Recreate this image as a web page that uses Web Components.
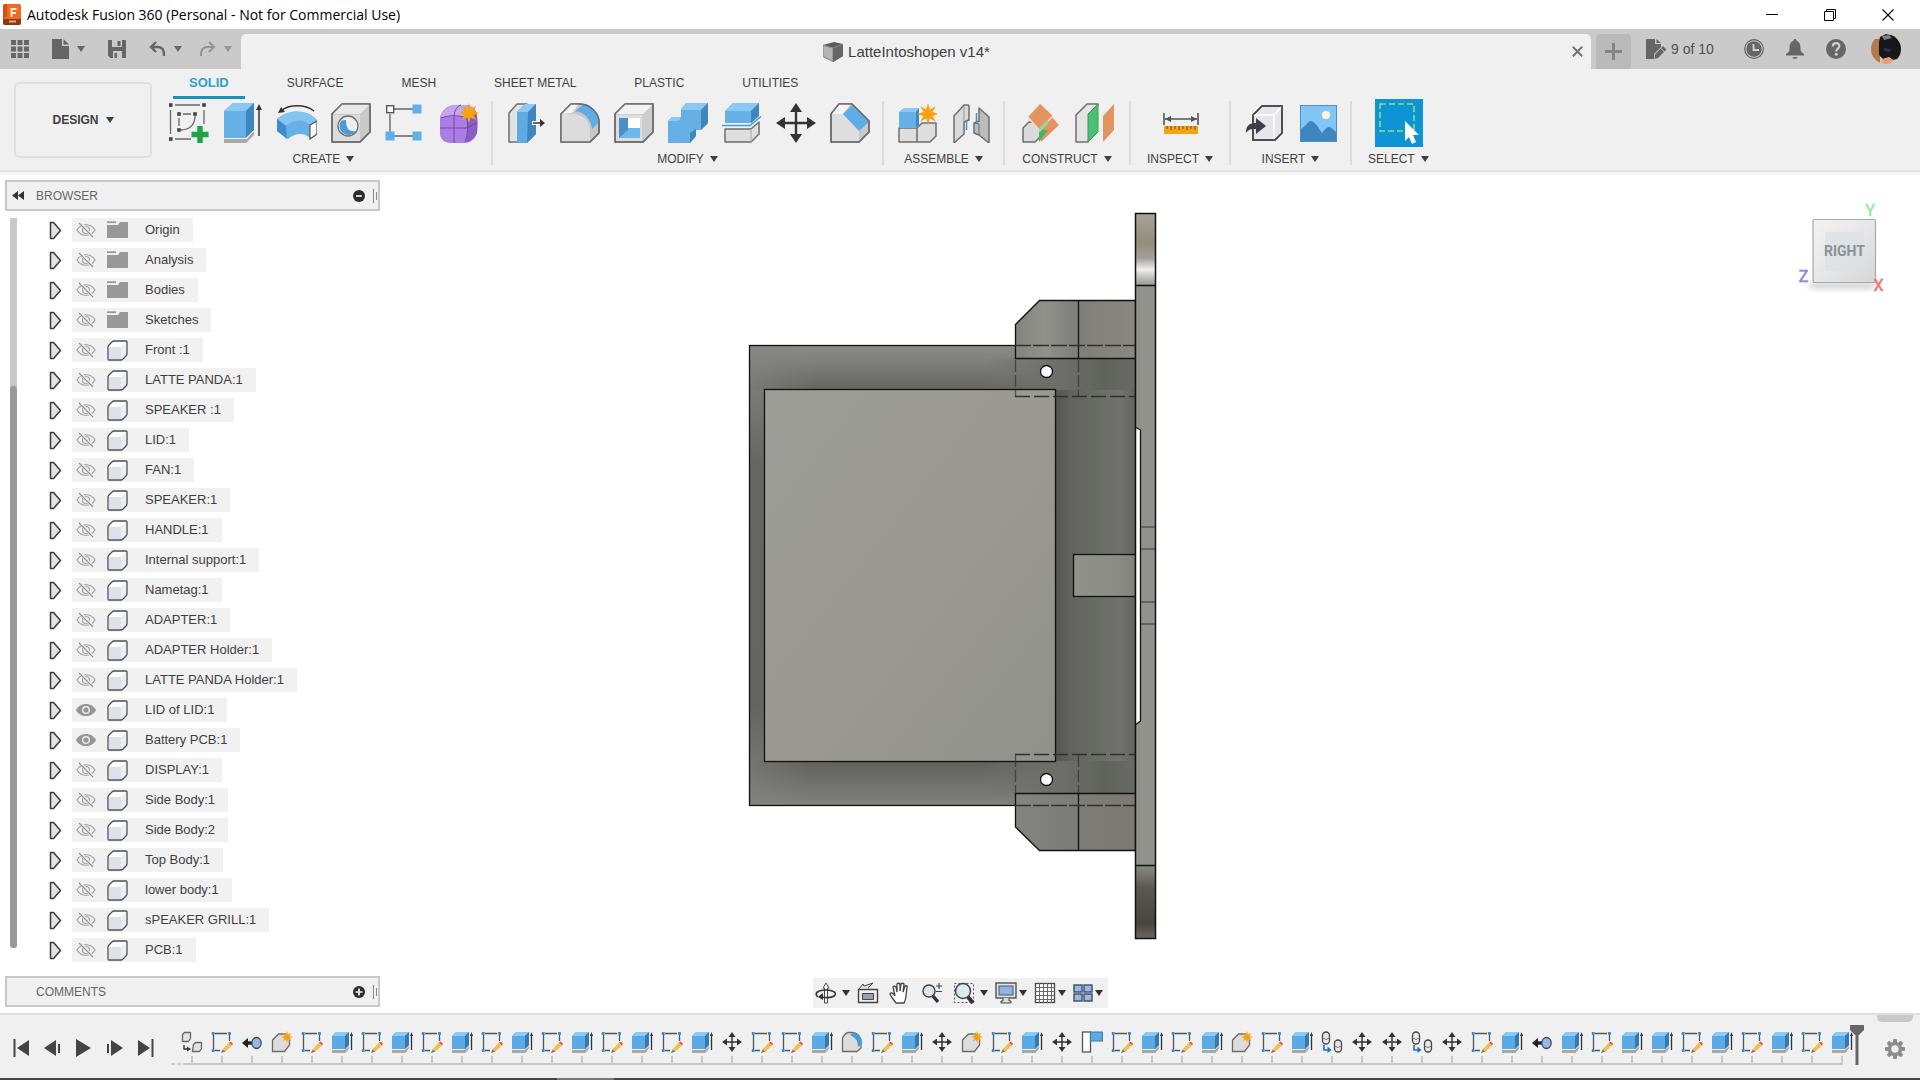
<!DOCTYPE html>
<html lang="en">
<head>
<meta charset="utf-8">
<title>Autodesk Fusion 360</title>
<style>
  html, body { margin: 0; height: 100%; overflow: hidden; background: #fff; }
  body { font: 13px/16px "Liberation Sans", Arial, sans-serif; color: #404040; }
</style>
</head>
<body>
<fusion-app></fusion-app>
<script>
const star = (cx, cy, R, r) => {
  let p = '';
  for (let i = 0; i < 16; i++) {
    const a = Math.PI * i / 8 - Math.PI / 2, q = i % 2 ? r : R;
    p += (cx + q * Math.cos(a)).toFixed(1) + ',' + (cy + q * Math.sin(a)).toFixed(1) + ' ';
  }
  return `<polygon points="${p}" fill="#f6a30f"/>`;
};
const sq = (x, y, s, f) => `<rect x="${x - s / 2}" y="${y - s / 2}" width="${s}" height="${s}" fill="${f}"/>`;
const G = 'stroke="#6e6e6e" stroke-width="1.5" stroke-linejoin="round"';
const gearTeeth = [0, 45, 90, 135, 180, 225, 270, 315].map(a => `<rect x="8" y="0" width="4" height="5" rx="1" transform="rotate(${a} 10 10)"/>`).join('');

/* Each entry: [width, height, markup] */
const ICONS = {
  logo: [18, 21, `<rect width="18" height="21" rx="2" fill="#f26a1b"/><path d="M0 15h18v4a2 2 0 0 1-2 2H2a2 2 0 0 1-2-2z" fill="#8a3a0c"/><path d="M0 15L4 12V0H2a2 2 0 0 0-2 2z" fill="#d4500f"/><path d="M7.500 4h6v2H9.500v2h3.500v2H9.500v3h-2z" fill="#ffe9d9"/><rect x="6" y="16.500" width="7" height="2" fill="#d9b09a"/>`],
  min: [12, 12, `<path d="M0 5.500h12" stroke="#000"/>`],
  restore: [12, 12, `<path d="M.5 2.500h9v9h-9zM2.500 2.500v-2h9v9h-2" fill="none" stroke="#000"/>`],
  close: [12, 12, `<path d="M.5.5l11 11m0-11l-11 11" stroke="#000" stroke-width="1.100"/>`],
  grid: [18, 18, `<g fill="#666">${[0, 6.5, 13].map(y => [0, 6.5, 13].map(x => `<rect x="${x}" y="${y}" width="5" height="5"/>`).join('')).join('')}</g>`],
  file: [17, 20, `<path d="M0 0h10v7h7v13H0z" fill="#666"/><path d="M11.500 0L17 5.500h-5.500z" fill="#666"/>`],
  save: [18, 18, `<path d="M0 0h18v18H2.500L0 15.500z" fill="#666"/><path d="M4 0h10v7H4zM5 11h9v7H5z" fill="#cacaca"/><path d="M9.500 1h3v5h-3zM6.500 13h2.500v5h-2.500zM4 3h4" fill="#666"/>`],
  undo: [17, 16, `<path d="M7 1L2 6l5 5M2.500 6H9c4 0 6.500 3 6 9" fill="none" stroke="#666" stroke-width="2.400"/>`],
  redo: [17, 16, `<path d="M10 1l5 5-5 5M14.500 6H8c-4 0-6.500 3-6 9" fill="none" stroke="#949494" stroke-width="2"/>`],
  caret: [8, 6, `<path d="M0 0h8L4 6z" fill="currentColor"/>`],
  doccube: [20, 20, `<path d="M0 3L11 0l9 2v12L10 20 0 15z" fill="#5c5c5c"/><path d="M0 3l10 3v14L0 15z" fill="#9c9c9c"/><path d="M1 4l8 2.500V18l-8-4z" fill="#b5b5b5"/><path d="M10 6l10-4v12l-10 6z" fill="#666"/><path d="M0 3l10 3 10-4" fill="none" stroke="#888"/>`],
  x: [11, 11, `<path d="M.8.8l9.400 9.400M10.200.8L.8 10.200" stroke="#747474" stroke-width="2"/>`],
  plus: [17, 17, `<path d="M8.500 0v17M0 8.500h17" stroke="#858585" stroke-width="3"/>`],
  docpen: [21, 20, `<path d="M0 0h9v5h6v3L8 15v5H0z" fill="#666"/><path d="M10.500 0L15 4h-4.500z" fill="#666"/><path d="M17 7l3.500 3.500L12 19l-3.500 1 .5-4.500z" fill="#666"/><path d="M14.500 9l4 4" stroke="#cacaca"/>`],
  clock: [20, 20, `<circle cx="10" cy="10" r="9.300" fill="none" stroke="#666" stroke-width="1.200"/><circle cx="10" cy="10" r="7.700" fill="#666"/><path d="M9.500 5v6H15" fill="none" stroke="#d4d4d4" stroke-width="1.800"/>`],
  bell: [18, 20, `<path d="M9 0c1 0 1.500.7 1.500 1.700C14 3 14.500 6 14.500 10c0 2 1 3.500 3.500 5v1.500H0V15c2.500-1.500 3.500-3 3.500-5 0-4 .5-7 4-8.300C7.500.7 8 0 9 0zM6.500 18h5c-.5 2.500-4.500 2.500-5 0z" fill="#666"/>`],
  help: [20, 20, `<circle cx="10" cy="10" r="10" fill="#666"/><path d="M6.800 7.500c0-4.500 6.600-4.300 6.600-.4 0 2.700-3.200 2.600-3.200 5.400" fill="none" stroke="#cecece" stroke-width="2.200"/><circle cx="10.200" cy="15.300" r="1.500" fill="#cecece"/>`],
  avatar: [30, 30, `<defs><clipPath id="c"><circle cx="15" cy="15" r="15"/></clipPath></defs><g clip-path="url(#c)"><rect width="30" height="30" fill="#d6c4b4"/><rect width="9" height="30" y="5" fill="#b07a4c"/><path d="M9 3l6-3 9 2 6 7v15l-8 2-4-3-5 3-5-5V8z" fill="#17161a"/><path d="M11 2l7-1 3 3-8 2z" fill="#7d8288"/><path d="M11 25l7-2 4 4-3 3h-7z" fill="#e0a07c"/><path d="M13 14l7 1-1 3-6-1z" fill="#2a3148"/></g>`],

  sketch: [40, 40, `<path d="M6 2h25M1.500 7v24M35 7v14M6 36h16" stroke="#666" stroke-width="1.300" fill="none"/>${sq(1.8, 2, 3.6, '#444')}${sq(35, 2, 3.6, '#444')}${sq(1.8, 36, 3.6, '#444')}<path d="M14 11h8M10 15v8M26 13C26 22 20 27 12 27" stroke="#666" stroke-width="1.300" fill="none"/>${sq(10, 11, 3.6, '#444')}${sq(26, 11, 3.6, '#444')}${sq(10, 27, 3.6, '#444')}<path d="M31 23v17M22.500 31.500h17" stroke="#1fa24a" stroke-width="5.400"/>`],
  extrude: [40, 40, `<path d="M1 36l23 0 7-8v4l-8 8H1z" fill="#a9a9a9"/><path d="M1 8l9-8h21v27l-8 8H1z" fill="#67b0e6"/><path d="M1 8l9-8h21l-8 8z" fill="#8bc8f2"/><path d="M23 8l8-8v27l-8 8z" fill="#3f86bf"/><path d="M1 36v-.5h22l8-8" stroke="#f2f2f2" fill="none"/><path d="M36 33V5" stroke="#333" stroke-width="1.500"/><path d="M33 7l3-6 3 6z" fill="#333"/>`],
  revolve: [40, 40, `<path d="M0 16C12 6 30 6 40 17l-7 5v13c-6-6-15-5-22 1L0 28z" fill="#67b0e6"/><path d="M0 16C12 6 30 6 40 17l-7 5C26 15 16 17 9 23z" fill="#84c4f0"/><path d="M0 16l9 7 1 13L0 28z" fill="#3f8ccc"/><path d="M33 22l7-4v13l-7 5z" fill="#fff" stroke="#555" stroke-width="1.200"/><path d="M37 8C28 1 12 1 4 8" fill="none" stroke="#333" stroke-width="1.500"/><path d="M1 10l3-6 4 5z" fill="#333"/>`],
  hole: [40, 40, `<path d="M1 11L11 1h28v28L29 39H1z" fill="#c9c9c9" ${G}/><path d="M1 11L11 1h28L29 11z" fill="#e9e9e9"/><path d="M2 12h27v26H2z" fill="#dcdcdc"/><path d="M1 11L11 1h28v28L29 39H1z" fill="none" ${G}/><circle cx="17" cy="23" r="10" fill="#eee" stroke="#6e6e6e" stroke-width="1.300"/><path d="M10 18a9 9 0 1 0 15 10c-7 1-10-2-10-11a9 9 0 0 0-5 1z" fill="#4c9ad6"/>`],
  pattern: [40, 40, `<path d="M9 6h20M5 11v18M9 33h20" stroke="#666" stroke-width="1.400" fill="none"/><rect x="1.700" y="2.700" width="7" height="7" fill="#fff" stroke="#555" stroke-width="1.400"/>${sq(32, 6, 9, '#5fb0ea')}${sq(5, 33, 9, '#5fb0ea')}${sq(32, 33, 9, '#5fb0ea')}`],
  form: [40, 40, `<path d="M1 16C1 8 9 2 17 2h9c8 0 12 6 12 12v14c0 6-6 12-12 12H12C5 40 1 36 1 30z" fill="#ab7ee2"/><path d="M1 14C5 5 12 2 18 2h8c4 0 8 3 10 6-4-1-7 2-9 5z" fill="#c4a6ee"/><path d="M28 14c3-4 6-6 9-5 2 6 2 15 1 21-2 5-7 9-11 9 2-8 2-17 1-25z" fill="#8a5cc4"/><path d="M1 25h26l11-5M15 40V14C15 8 18 3 22 2M2 15c8-3 18-3 26 0 1 8 1 17-2 24" stroke="#7444b0" stroke-width="1" fill="none"/>${star(30, 10, 10, 5)}`],
  presspull: [40, 40, `<path d="M3 10L11 1h10v30l-9 8H3z" fill="#e2e2e2" ${G}/><path d="M11 9l8-8h11v30l-9 9H11z" fill="#5faae0"/><path d="M11 9l8-8h11l-8 8z" fill="#8bc8f2"/><path d="M22 9l8-8v30l-9 9z" fill="#3f86bf"/><path d="M26 20h8" stroke="#fff" stroke-width="4"/><path d="M27 20h9" stroke="#333" stroke-width="1.500"/><path d="M34 16l5 4-5 4z" fill="#333"/>`],
  fillet: [40, 40, `<path d="M1 11L11 1h9c10 0 20 10 19 20v9l-9 9H1z" fill="#c6c6c6" ${G}/><path d="M1 11h11c12 0 18 8 18 17v11H1z" fill="#dcdcdc"/><path d="M1 11L11 1h8l-7 9z" fill="#f4f4f4"/><path d="M15 8l9-7c9 2 15 9 15 18l-7 7c-1-9-7-17-17-18z" fill="#5fade6"/><path d="M1 11L11 1h9c10 0 20 10 19 20v9l-9 9H1z" fill="none" ${G}/>`],
  shell: [40, 40, `<path d="M1 11L11 1h28v28L29 39H1z" fill="#cdcdcd" ${G}/><path d="M1 11L11 1h28L29 11z" fill="#f2f2f2"/><path d="M2 12h26v26H2z" fill="#ddd"/><rect x="5" y="15" width="21" height="20" fill="#fff"/><path d="M5 15l9 10h12v10H5z" fill="#6db9ee"/><path d="M5 15h9v12l-9 8z" fill="#4a90c8"/><path d="M1 11L11 1h28v28L29 39H1z" fill="none" ${G}/>`],
  combine: [40, 40, `<path d="M0 18l4-4h9V6l5-6h22v20l-7 7h-5v6l-6 7H0z" fill="#67b0e6"/><path d="M0 18l4-4h9l-2 4zM13 7l5-7h22l-7 7z" fill="#8bc8f2"/><path d="M33 7l7-7v20l-7 7zM22 30l6-4v7l-6 7z" fill="#3f86bf"/>`],
  split: [40, 40, `<path d="M3 8l8-8h26v13l-8 7H3z" fill="#67b0e6"/><path d="M3 8l8-8h26l-8 8z" fill="#8bc8f2"/><path d="M29 8l8-8v13l-8 7z" fill="#3f86bf"/><path d="M0 22.500h28l11-9" fill="none" stroke="#3f9fd8" stroke-width="1.600"/><path d="M3 26h26l8-7v12l-8 8H3z" fill="#dedede" ${G}/><path d="M29 26v13" stroke="#aaa"/>`],
  move: [40, 40, `<path d="M20 5v30M5 20h30" stroke="#333" stroke-width="2.400"/><path d="M20 0l6 9H14zM20 40l6-9H14zM0 20l9-6v12zM40 20l-9-6v12z" fill="#333"/>`],
  chamfer: [40, 40, `<path d="M1 11L9 1h13l17 17v11l-10 10H1z" fill="#cacaca" ${G}/><path d="M2 11h11l16 16v11H2z" fill="#dedede"/><path d="M1 11L9 1h12l-8 10z" fill="#f4f4f4"/><path d="M13 11l9-9 17 17-10 9z" fill="#5fade6"/><path d="M1 11L9 1h13l17 17v11l-10 10H1z" fill="none" ${G}/>`],
  newcomp: [40, 40, `<path d="M2 25h18v14H2zM20 25l5-5h14v13l-6 6H20z" fill="#dedede" ${G}/><path d="M2 9l5-4h15v16l-2 4H2z" fill="#67b0e6"/><path d="M2 9l5-4h15l-3 4z" fill="#8bc8f2"/><path d="M19 9l3-4v17l-3 3z" fill="#3f86bf"/>${star(31, 11, 11, 5)}`],
  joint: [40, 40, `<path d="M3 13L13 2h4q1 0 1 1v14l-5 2v12L3 40z" fill="#d9d9d9" ${G}/><path d="M13 3v16" stroke="#999"/><path d="M38 14L28 5v13l-5 2v10l5 2 10 8z" fill="#bcbcbc" ${G}/><path d="M23 20l5 1v11" fill="none" stroke="#6e6e6e"/><path d="M15.500 18v9M25.500 10v9" stroke="#3a95d8" stroke-width="1.500"/>`],
  cplane: [40, 40, `<path d="M2 25l6-6h12v14l-6 6H2z" fill="#dadada" ${G}/><path d="M19 1l19 21-18 17-2-15z" fill="#e2935f"/><path d="M18 39l9-12V15L18 26z" fill="#3cb863"/><path d="M7 14L19 1l12 11-3 16-10-2z" fill="#e2935f"/><path d="M7 14l11 13 13-13" stroke="#f3ddd0" stroke-width="1.500" fill="none"/><path d="M18 25l9-9v5l-9 9z" fill="#9fd0a0"/>`],
  cplane2: [40, 40, `<path d="M1 12L12 1h11L13 39H1z" fill="#e4e4e4" ${G}/><path d="M13 11L23 1v28L13 39z" fill="#4bc074" stroke="#3a9d5c"/><path d="M28 13L39 1v26L28 39z" fill="#e2935f"/>`],
  measure: [40, 40, `<path d="M3 10v12M37 10v12M4 16h32" stroke="#555" stroke-width="1.600"/><path d="M4 16l6-3v6zM36 16l-6-3v6z" fill="#555"/><rect x="3" y="23" width="34" height="8" fill="#f5a316"/><path d="M6 23v3M10 23v4M14 23v3M18 23v4M22 23v3M26 23v4M30 23v3M34 23v4" stroke="#6b4a10"/>`],
  insert: [40, 40, `<path d="M9 12L18 3h20v27l-7 7H9z" fill="#e6e6ec" stroke="#444" stroke-width="1.500"/><path d="M9 12h21l8-9M30 12v25" stroke="#fff" stroke-width="1.500" fill="none"/><path d="M9 12L18 3h20v27l-7 7H9z" fill="none" stroke="#444" stroke-width="1.500"/><path d="M2 30c0-8 4-10 10-10v-5l10 8-10 8v-5c-5 0-7 0-10 4z" fill="#3c3f46"/>`],
  image: [40, 40, `<rect x="2.500" y="2.500" width="36" height="36" fill="#82c6f8" stroke="#4d8fc4"/><path d="M3 26c5-3 7-8 10-8s7 6 11 12c3-4 5-6 7-6s4 2 7 5v9H3z" fill="#3f86bf"/><circle cx="28" cy="12" r="4" fill="#fbf8d0"/>`],
  select: [48, 48, `<rect width="48" height="48" fill="#0d94d4"/><path d="M5 5h34v27H5z" fill="none" stroke="#8be07c" stroke-width="1.600" stroke-dasharray="6 3"/><path d="M30 22v20l4-4 3 7 4-2-3-7h6z" fill="#fff"/>`],

  rewind: [12, 9, `<path d="M6 0v9L0 4.500zM12 0v9L6 4.500z" fill="#333"/>`],
  minus: [12, 12, `<circle cx="6" cy="6" r="6" fill="#2c2c2c"/><path d="M3 6h6" stroke="#f0f0f0" stroke-width="1.700"/>`],
  add: [12, 12, `<circle cx="6" cy="6" r="6" fill="#2c2c2c"/><path d="M2.500 6h7M6 2.500v7" stroke="#f0f0f0" stroke-width="1.700"/>`],
  grip: [4, 14, `<path d="M.5 0v14M3.500 3v8" stroke="#888"/>`],
  arrow: [13, 19, `<path d="M1.500 1.500h3l7 8-7 8h-3z" fill="#e2e2e2" stroke="#3a3a3a" stroke-width="1.500" stroke-linejoin="round"/>`],
  eyeoff: [20, 16, `<path d="M1 8c4-7 14-7 18 0-4 7-14 7-18 0z" fill="none" stroke="#a2a2a2" stroke-width="1.200"/><circle cx="10" cy="8" r="3.500" fill="none" stroke="#a2a2a2" stroke-width="1.200"/><path d="M4 1l13 14" stroke="#f2f2f2" stroke-width="3"/><path d="M3 1l14 14" stroke="#8e8e8e" stroke-width="1.100"/>`],
  eye: [20, 16, `<path d="M0 8c4-8 16-8 20 0-4 8-16 8-20 0z" fill="#969696"/><circle cx="10" cy="8" r="4" fill="#ececec"/><circle cx="10" cy="8" r="2.600" fill="#969696"/>`],
  folder: [21, 18, `<path d="M0 4h11l2-3h8v16H0z" fill="#989898"/><path d="M0 1.200h9" stroke="#989898" stroke-width="1.800"/>`],
  body: [21, 21, `<path d="M1 6l5-5h13.500v14l-4 5H1z" fill="#fff"/><path d="M2 7h12v12H2z" fill="#dfe1ea"/><path d="M14 7l5-5v13l-5 5z" fill="#eeeef2"/><path d="M1 7q0-1 1-2l3-3q1-1 2-1h12q1 0 1 1v12q0 1-1 2l-3 3q-1 1-2 1H2q-1 0-1-1z" fill="none" stroke="#4c4f58" stroke-width="1.300"/>`],

  orbit: [22, 22, `<path d="M9.500 21V6L8 6l3-5 3 5h-1.500v15z" fill="#fff" stroke="#444"/><path d="M3 15C-2 11 4 8 11 8s12 3 8 6c-3 2-9 2-12 1" fill="none" stroke="#333" stroke-width="1.600"/><path d="M8 11v7l-5-3z" fill="#333"/>`],
  look: [22, 22, `<path d="M1.500 7.500h19v13h-19z" fill="#eee" stroke="#444" stroke-width="1.400"/><path d="M5.500 11.500h11v6h-11z" fill="#9aa0b4" stroke="#444"/><path d="M2 7l4-5 1 2 9-3-5 5" fill="#ddd" stroke="#444"/>`],
  hand: [22, 22, `<path d="M7 21c-2-3-5-6-6-9 1-2 3-1 5 2L4 5c1-2 2-1 3 0l1 5V2c1-1 2-1 3 0v7l1-7c1-1 2-1 3 0l-1 8 2-6c1-1 3 0 2 1l-1 9c0 3-1 5-2 7z" fill="#fff" stroke="#444" stroke-width="1.300"/>`],
  zoom: [22, 22, `<circle cx="8" cy="9" r="6" fill="#d9e8f0" stroke="#444" stroke-width="1.500"/><path d="M12 14l5 6" stroke="#333" stroke-width="3.400"/><path d="M15 4h6M18 1v6M15 9.500h6" stroke="#444" stroke-width="1.200"/>`],
  zoomwin: [22, 22, `<path d="M1.500 1.500h19v19h-19z" fill="none" stroke="#555" stroke-dasharray="2 2"/><circle cx="10" cy="9" r="7.500" fill="#dbe9f1" stroke="#444" stroke-width="1.500"/><path d="M15 15l5 6" stroke="#333" stroke-width="4"/>`],
  display: [22, 22, `<rect x="1" y="1" width="20" height="15" fill="#e2e2e2" stroke="#444" stroke-width="1.300"/><rect x="4" y="4" width="14" height="9" fill="#8fb4e0" stroke="#3d5878"/><path d="M8 16v3H6v2h10v-2h-2v-3" fill="#ddd" stroke="#444"/>`],
  gridset: [22, 22, `<rect x="1.500" y="1.500" width="19" height="19" fill="#fff" stroke="#444" stroke-width="1.300"/><path d="M5.500 1v20M9.500 1v20M13.500 1v20M17.500 1v20M1 5.500h20M1 9.500h20M1 13.500h20M1 17.500h20" stroke="#666"/>`],
  views: [20, 18, `<g fill="#9cb8e2" stroke="#3c4c68" stroke-width="1.400"><rect x="1" y="1" width="8" height="7"/><rect x="11" y="1" width="8" height="7"/><rect x="1" y="10" width="8" height="7"/><rect x="11" y="10" width="8" height="7"/></g>`],

  first: [17, 18, `<path d="M1.500 0v18" stroke="#444" stroke-width="2"/><path d="M16 1v16L4 9z" fill="#444"/>`],
  prev: [17, 18, `<path d="M12 1v16L0 9z" fill="#444"/><path d="M15 5v9" stroke="#444" stroke-width="2"/>`],
  play: [17, 18, `<path d="M1 0v18l15-9z" fill="#444"/>`],
  next: [17, 18, `<path d="M2 5v9" stroke="#444" stroke-width="2"/><path d="M5 1v16l12-8z" fill="#444"/>`],
  last: [17, 18, `<path d="M15.500 0v18" stroke="#444" stroke-width="2"/><path d="M1 1v16l12-8z" fill="#444"/>`],
  tS: [22, 22, `<path d="M4 2.500h12M2.500 4v14M18.500 4v6M4 19.500h5" stroke="#555" stroke-width="1.300"/>${sq(2.2, 2.5, 2.8, '#2a86d8')}${sq(18.5, 2.5, 2.8, '#2a86d8')}${sq(2.2, 19.5, 2.8, '#2a86d8')}<path d="M11.500 18.500L18 11.500l3 3-6.500 6z" fill="#f5bd4f"/><path d="M18 11.500l1.500-1 2.500 2-1 2z" fill="#ee4c3c"/><path d="M11.500 18.500l3 2-4.500 1.500z" fill="#6e7680"/>`],
  tE: [22, 22, `<path d="M1 19h13l4-4v2.500L14.500 22H1z" fill="#a8a8a8"/><path d="M1 5l4-4h13v13l-4 4H1z" fill="#5aaae6"/><path d="M1 5l4-4h13l-4 4z" fill="#8bcaf6"/><path d="M14 5l4-4v13l-4 4z" fill="#3778b0"/><path d="M20.500 19V4" stroke="#333" stroke-width="1.300"/><path d="M19 5l1.500-4L22 5z" fill="#333"/>`],
  tM: [22, 22, `<path d="M11 3v16M3 11h16" stroke="#333" stroke-width="1.500"/><path d="M11 1l3.500 5h-7zM11 21l3.500-5h-7zM1 11l5-3.500v7zM21 11l-5-3.500v7z" fill="#333"/>`],
  tC: [22, 22, `<path d="M1.500 3.500l2-2h6v6l-2 3h-6zM12.500 13.500l2-2h6v6l-2 3h-7z" fill="#e2e2e2" stroke="#666" stroke-width="1.300" stroke-linejoin="round"/><path d="M3 14v4h4" fill="none" stroke="#333" stroke-width="1.400"/><path d="M6 15.500l4 2.500-4 2.500z" fill="#333"/>`],
  tK: [22, 22, `<rect x="1.500" y="1" width="7" height="12" rx="3.500" fill="#e8e8e8" stroke="#444" stroke-width="1.300"/><rect x="13.500" y="9" width="7" height="12" rx="3.500" fill="#e8e8e8" stroke="#444" stroke-width="1.300"/><path d="M1.500 7q3.500 3 7 0M13.500 15q3.500 3 7 0" fill="none" stroke="#777"/><path d="M3 14v5h4" fill="none" stroke="#1c6fd0" stroke-width="1.600"/><path d="M6.500 15.500l4 3.500-4 3z" fill="#1c6fd0"/>`],
  tJ: [22, 22, `<path d="M7 12h5" stroke="#222" stroke-width="3.400"/><path d="M7 7v10L1 12z" fill="#222"/><ellipse cx="15.500" cy="12" rx="4.700" ry="5.500" fill="#9bb6e0" stroke="#3c4c68" stroke-width="1.300"/>`],
  tN: [22, 22, `<path d="M1.500 9l6-6h7l4 5v6l-5 6.500h-12z" fill="#dcdcdc" stroke="#6a6a6a" stroke-width="1.300"/>${star(16, 6, 6, 2.8)}`],
  tF: [22, 22, `<path d="M1.500 7q3-5.500 6-5.500h4Q20 3 20 12v5l-4 3.500H1.500z" fill="#dcdcdc" stroke="#6a6a6a" stroke-width="1.300"/><path d="M9 4l4-3q8 2 8 12l-4 3q0-9-8-12z" fill="#4a9bd0"/>`],
  tL: [22, 22, `<rect x="1.500" y="1" width="8" height="20" fill="#fff" stroke="#555" stroke-width="1.300"/><rect x="9.500" y="1" width="12" height="9" fill="#5faae0" stroke="#3c78a8"/>`],
  marker: [14, 40, `<path d="M0 0h14v5L9 10H5L0 5z" fill="#666"/><path d="M7 8v32" stroke="#666" stroke-width="3"/>`],
  gear: [20, 20, `<g fill="#8d8d8d">${gearTeeth}</g><circle cx="10" cy="10" r="5.500" fill="none" stroke="#8d8d8d" stroke-width="3.600"/>`]
};

const define = (name, html) => customElements.define(name, class extends HTMLElement {
  constructor() { super(); this.attachShadow({ mode: 'open' }); }
  connectedCallback() {
    if (this.shadowRoot.childNodes.length) return;
    const t = document.createElement('template');
    t.innerHTML = '<style>*{box-sizing:border-box}button{appearance:none;border:0;margin:0;padding:0;background:none;font:inherit;color:inherit;display:flex;align-items:center;justify-content:center}</style>'
      + (typeof html === 'function' ? html(this) : html);
    this.shadowRoot.append(t.content.cloneNode(true));
  }
});

define('fx-icon', el => {
  const [w, h, m] = ICONS[el.getAttribute('name')];
  return `<style>:host{display:block;flex:none}svg{display:block}</style><svg width="${w}" height="${h}" viewBox="0 0 ${w} ${h}" aria-hidden="true">${m}</svg>`;
});
const ic = n => `<fx-icon name="${n}"></fx-icon>`;
const btn = (n, label, cls = '') => `<button class="${cls}" aria-label="${label}">${ic(n)}</button>`;

define('window-title', `<style>
  :host{display:flex;align-items:center;height:29px;padding:0 26px 0 3px;background:#fff;color:#000;font:14px/20px "Open Sans","Noto Sans",sans-serif}
  .t{margin-left:6px;flex:1}
  .c{display:flex;gap:46px}
</style>${ic('logo')}<span class="t"><slot></slot></span>
<div class="c">${btn('min', 'Minimize')}${btn('restore', 'Restore')}${btn('close', 'Close')}</div>`);

define('app-bar', `<style>
  :host{display:flex;align-items:stretch;height:40px;background:#cacaca;color:#666}
  .quick{display:flex;align-items:center;width:241px;padding-left:11px;gap:23px}
  .history{display:flex;gap:17px}
  .pair{display:flex;align-items:center;gap:8px}
  .dim{color:#949494}
  .doc{flex:1;display:flex;align-items:center;margin-top:5px;background:#f0f0f0;border-radius:5px 5px 0 0;padding:0 8px 0 0;color:#404040;font-size:15px}
  .name{flex:1;display:flex;justify-content:center;align-items:center;gap:5px}
  .new{width:35px;margin:5px 0 0 5px;background:#bababa;border-radius:5px 5px 0 0}
  .user{display:flex;align-items:center;width:289px;padding:0 19px 0 15px;gap:22px;font-size:14px;color:#505050}
  .user .pair{gap:4px;margin-right:8px}
  .me{margin-left:auto}
</style>
<div class="quick">${btn('grid', 'Data panel')}
<div class="pair">${btn('file', 'File')}${ic('caret')}</div>${btn('save', 'Save')}
<div class="history"><div class="pair">${btn('undo', 'Undo')}${ic('caret')}</div>
<div class="pair dim">${btn('redo', 'Redo')}${ic('caret')}</div></div></div>
<div class="doc"><div class="name">${ic('doccube')}<slot></slot></div>${btn('x', 'Close tab')}</div>
${btn('plus', 'New design', 'new')}
<div class="user"><div class="pair">${ic('docpen')}<span>9 of 10</span></div>${btn('clock', 'Jobs')}${btn('bell', 'Notifications')}${btn('help', 'Help')}${btn('avatar', 'Account', 'me')}</div>`);

define('tool-group', el => `<style>
  :host{display:flex;flex-direction:column;align-items:center;border-right:2px solid #dcdcdc;height:64px}
  :host([wide]){min-width:126px}
  :host([last]){border:0}
  .icons{display:flex;padding:0 5px 0 6px;height:44px;align-items:center;justify-content:center}
  .icons button{width:54px;height:44px}
  .label{margin-top:8px;padding:0 16px;gap:6px;font-size:12px;line-height:12px;height:12px}
</style><div class="icons">${el.getAttribute('icons').split(' ').map(n => btn(n, n)).join('')}</div>
<button class="label"><slot></slot>${ic('caret')}</button>`);

define('tool-ribbon', `<style>
  :host{display:flex;height:106px;background:#f0f0f0;padding:0 0 0 14px;border-bottom:3px solid #f5f5f5;box-shadow:inset 0 -2px #e2e2e2}
  .design{width:138px;height:76px;margin-top:13px;border:2px solid #e0e0e0;border-radius:5px;font-weight:bold;font-size:12px;gap:7px}
  nav{display:flex;gap:26px;margin-left:17px}
  nav button{height:30px;padding:0 16px;font-size:12px;border-bottom:3px solid transparent}
  nav .on{font-weight:bold;font-size:13px;color:#2f9fce;border-color:#1b8ec2}
  .col{margin-left:4px}
  .groups{display:flex;margin-top:2px}
</style>
<button class="design">DESIGN ${ic('caret')}</button>
<div class="col"><nav><button class="on">SOLID</button><button>SURFACE</button><button>MESH</button><button>SHEET METAL</button><button>PLASTIC</button><button>UTILITIES</button></nav>
<div class="groups">
<tool-group icons="sketch extrude revolve hole pattern form">CREATE</tool-group>
<tool-group icons="presspull fillet shell combine split move chamfer">MODIFY</tool-group>
<tool-group icons="newcomp joint">ASSEMBLE</tool-group>
<tool-group icons="cplane cplane2" wide>CONSTRUCT</tool-group>
<tool-group icons="measure">INSPECT</tool-group>
<tool-group icons="insert image">INSERT</tool-group>
<tool-group icons="select" last>SELECT</tool-group>
</div></div>`);

define('panel-bar', el => `<style>
  :host{display:flex;align-items:center;height:31px;border:2px solid #c8c8c8;background:#f0f0f0;padding:0 1px 0 5px;font-size:12px;color:#666}
  .lead{width:24px;justify-content:flex-start}.t{flex:1}.m{margin-right:8px}
</style><button class="lead" aria-label="Collapse">${el.hasAttribute('lead') ? ic('rewind') : ''}</button><span class="t"><slot></slot></span>
${btn(el.getAttribute('icon'), 'Toggle', 'm')}${ic('grip')}`);

define('tree-item', el => `<style>
  :host{display:flex;align-items:center;height:24px;gap:10px}
  .chip{display:flex;align-items:center;height:24px;background:#f1f1f1;padding:0 13px 0 4px}
  .kind{margin-left:11px;width:21px}
  .n{margin-left:17px;white-space:pre}
</style>${btn('arrow', 'Expand')}<div class="chip">${btn(el.hasAttribute('shown') ? 'eye' : 'eyeoff', 'Visibility')}<span class="kind">${ic(el.getAttribute('kind'))}</span><span class="n"><slot></slot></span></div>`);

const ITEMS = ['Origin', 'Analysis', 'Bodies', 'Sketches', 'Front :1', 'LATTE PANDA:1', 'SPEAKER :1', 'LID:1', 'FAN:1', 'SPEAKER:1', 'HANDLE:1', 'Internal support:1', 'Nametag:1', 'ADAPTER:1', 'ADAPTER Holder:1', 'LATTE PANDA Holder:1', 'LID of LID:1', 'Battery PCB:1', 'DISPLAY:1', 'Side Body:1', 'Side Body:2', 'Top Body:1', 'lower body:1', 'sPEAKER GRILL:1', 'PCB:1'];

define('browser-panel', `<style>
  :host{display:flex;flex-direction:column;width:375px;margin:5px 0 6px 5px}
  .body{flex:1;display:flex;gap:32px;padding:7px 0 0 5px;min-height:0}
  .track{width:7px;height:730px;background:#c8c8c8;border-radius:0 0 4px 4px;display:flex;flex-direction:column;justify-content:flex-end}
  .thumb{height:77%;background:#999;border-radius:4px}
  .list{display:flex;flex-direction:column;gap:6px}
</style><panel-bar lead icon="minus">BROWSER</panel-bar>
<div class="body"><div class="track"><div class="thumb"></div></div><div class="list">${ITEMS.map((t, i) => `<tree-item kind="${i < 4 ? 'folder' : 'body'}"${i === 16 || i === 17 ? ' shown' : ''}>${t}</tree-item>`).join('')}</div></div>
<panel-bar icon="add">COMMENTS</panel-bar>`);

define('model-view', `<style>:host{display:block;min-height:0}svg{display:block;width:100%;height:100%}</style>
<svg viewBox="0 175 1920 838" role="img" aria-label="Right view of the model">
<defs>
<linearGradient id="top" x2="0" y2="1"><stop offset="0" stop-color="#8a8b86"/><stop offset=".35" stop-color="#7f807b"/><stop offset="1" stop-color="#646560"/></linearGradient>
<linearGradient id="bot" x2="0" y2="1"><stop offset="0" stop-color="#60615c"/><stop offset=".6" stop-color="#73746f"/><stop offset="1" stop-color="#80817c"/></linearGradient>
<linearGradient id="lef" x2="0" y2="1"><stop offset="0" stop-color="#7a7a77"/><stop offset=".2" stop-color="#666664"/><stop offset=".85" stop-color="#646462"/><stop offset="1" stop-color="#747471"/></linearGradient>
<linearGradient id="fadeL"><stop offset="0" stop-color="#858681"/><stop offset="1" stop-color="#858681" stop-opacity="0"/></linearGradient>
<linearGradient id="rig"><stop offset="0" stop-color="#545451"/><stop offset=".18" stop-color="#62635e"/><stop offset=".5" stop-color="#696b65"/><stop offset=".8" stop-color="#71726d"/><stop offset="1" stop-color="#63645f"/></linearGradient>
<linearGradient id="cor"><stop offset="0" stop-color="#73746f" stop-opacity="0"/><stop offset=".5" stop-color="#6e6f6a"/><stop offset=".8" stop-color="#60625c"/><stop offset="1" stop-color="#6a6b66"/></linearGradient>
<linearGradient id="inn" x2="1" y2="1"><stop offset="0" stop-color="#9d9e97"/><stop offset=".5" stop-color="#9a9a93"/><stop offset="1" stop-color="#91918b"/></linearGradient>
<linearGradient id="br"><stop offset="0" stop-color="#83847f"/><stop offset=".25" stop-color="#90918b"/><stop offset=".5" stop-color="#7e7f7a"/><stop offset="1" stop-color="#8b8781"/></linearGradient>
<linearGradient id="bb"><stop offset="0" stop-color="#83847f"/><stop offset=".5" stop-color="#7c7d78"/><stop offset="1" stop-color="#7d7972"/></linearGradient>
<linearGradient id="cap" x2="0" y2="1"><stop offset="0" stop-color="#aaa195"/><stop offset=".4" stop-color="#948c7c"/><stop offset=".62" stop-color="#a59f98"/><stop offset=".78" stop-color="#f0efed"/><stop offset=".88" stop-color="#c6c5c3"/><stop offset="1" stop-color="#999a93"/></linearGradient>
<linearGradient id="cap2" x2="0" y2="1"><stop offset="0" stop-color="#8a8882"/><stop offset=".3" stop-color="#5b5850"/><stop offset=".8" stop-color="#48453e"/><stop offset="1" stop-color="#686660"/></linearGradient>
<linearGradient id="tab"><stop offset="0" stop-color="#90918b"/><stop offset=".7" stop-color="#8d8d88"/><stop offset="1" stop-color="#80817b"/></linearGradient>
<linearGradient id="cube" x2="1" y2="1"><stop offset="0" stop-color="#f2f2f2"/><stop offset=".5" stop-color="#e6e7e9"/><stop offset="1" stop-color="#d6d6d6"/></linearGradient>
<filter id="soft" x="-20%" y="-100%" width="140%" height="300%"><feGaussianBlur stdDeviation="3"/></filter>
</defs>
<rect x="750" y="346" width="386" height="459" fill="#70716c"/>
<rect x="750" y="389" width="15" height="374" fill="url(#lef)"/>
<rect x="750" y="346" width="386" height="44" fill="url(#top)"/>
<rect x="750" y="761" width="386" height="44" fill="url(#bot)"/>
<rect x="750" y="346" width="70" height="44" fill="url(#fadeL)" opacity=".6"/>
<rect x="750" y="761" width="60" height="44" fill="url(#fadeL)" opacity=".5"/>
<rect x="1056" y="389" width="80" height="373" fill="url(#rig)"/>
<rect x="980" y="358" width="156" height="32" fill="url(#cor)"/>
<rect x="980" y="761" width="156" height="32" fill="url(#cor)"/>
<rect x="749.500" y="345.500" width="386" height="460" fill="none" stroke="#111" stroke-width="1.300"/>
<rect x="764.500" y="389.500" width="291" height="372" fill="url(#inn)" stroke="#111" stroke-width="1.300"/>
<g stroke="#111" stroke-width="1.300">
<path d="M1015.500 358.500V324.500L1039.500 300.500H1135.500V358.500Z" fill="url(#br)"/>
<path d="M1015.500 793.500V827L1039.500 850.500H1135.500V793.500Z" fill="url(#bb)"/>
<path d="M1078.500 300v58M1078.500 793v57"/>
<rect x="1073.500" y="554.500" width="62" height="42" fill="url(#tab)"/>
<circle cx="1046.500" cy="371.500" r="6" fill="#fff"/><circle cx="1046.500" cy="779.500" r="6" fill="#fff"/>
</g>
<g stroke="#30302e" stroke-width="1.300" fill="none">
<path d="M1015 345.500h120M1015 805.500h120" stroke-dasharray="16 2"/>
<path d="M1015 396.500h120M1015 754.500h120" stroke-dasharray="15 4"/>
<path d="M1015.500 360v36M1015.500 755v38M1078.500 360v36M1078.500 755v38" stroke-dasharray="12 3" opacity=".7"/>
</g>
<rect x="1135.500" y="213.500" width="20" height="725" fill="#92928d"/>
<rect x="1136" y="214" width="19" height="71" fill="url(#cap)"/>
<rect x="1136" y="866" width="19" height="72" fill="url(#cap2)"/>
<path d="M1136 427.500L1140.500 430V721L1136 724.500Z" fill="#fff"/>
<path d="M1136 427.500L1140.500 430V721L1136 724.500M1135.500 285.500h20M1135.500 865.500h20" fill="none" stroke="#111" stroke-width="1.300"/>
<path d="M1141 527h14M1141 549h14M1141 602h14M1141 624h14" stroke="#555" stroke-width="1.300"/>
<rect x="1135.500" y="213.500" width="20" height="725" fill="none" stroke="#111" stroke-width="1.500"/>

<path d="M1808 283h70l-6 5h-60z" fill="#999" opacity=".6" filter="url(#soft)"/>
<rect x="1813" y="219.500" width="62.500" height="63" rx="2" fill="url(#cube)" stroke="#aaa" stroke-width="1.200"/>
<rect x="1825" y="232" width="39" height="39" fill="#dcdfe4" opacity=".7"/>
<g font-family="Roboto, sans-serif" text-anchor="middle">
<text x="1844.500" y="256" font-size="14" font-weight="bold" fill="#8b9197">RIGHT</text>
<g font-size="16" stroke-width=".5">
<text x="1870" y="216" fill="#8fec98" stroke="#8fec98">Y</text><text x="1803.500" y="282" fill="#8a86e4" stroke="#8a86e4">Z</text><text x="1878.500" y="291" fill="#f07474" stroke="#f07474">X</text></g></g>
</svg>`);

define('nav-bar', `<style>
  :host{display:flex;align-items:center;height:30px;background:#f0f0f0;padding:0 5px 0 2px;gap:7px;color:#333}
  .p{display:flex;align-items:center;gap:5px}
  .s{gap:2px}
  .one{margin-right:3px}
</style><div class="p">${btn('orbit', 'Orbit')}${ic('caret')}</div>${btn('look', 'Look at', 'one')}${btn('hand', 'Pan', 'one')}${btn('zoom', 'Zoom', 'one')}
<div class="p">${btn('zoomwin', 'Fit')}${ic('caret')}</div><div class="p s">${btn('display', 'Display settings')}${ic('caret')}</div>
<div class="p s">${btn('gridset', 'Grid and snaps')}${ic('caret')}</div><div class="p s">${btn('views', 'Viewports')}${ic('caret')}</div>`);

const STEPS = 'CSJNSESESESESESESEMSSEFSEMNSEMLSESENSEKMMKMSEJESEESESESE';
define('time-line', `<style>
  :host{display:flex;height:67px;border-top:2px solid #dedede;padding-left:6px;background:linear-gradient(90deg,#444 29%,#777 29% 32%,#444 32%) bottom/100% 2px no-repeat,#f0f0f0}
  .play{display:flex;height:66px;align-items:center}
  .play button{width:31px;height:30px}
  .track{margin-left:10px;padding-top:16px}
  .steps{display:flex;padding-left:6px}
  .steps button{width:30px;height:32px;flex-direction:column;justify-content:space-between}
  .steps button::after{content:"";width:2px;height:7px;background:#c8c8c8}
  .steps .mark{width:14px;height:40px;margin:-6px 0 -2px -7px}
  .steps .mark::after{display:none}
  .rail{display:flex;gap:2px;margin-right:21px}
  .rail i{width:4px;height:2px;background:#d0d0d0}.rail b{flex:1;height:2px;background:#c8c8c8}
  .end{flex:1;display:flex;flex-direction:column;align-items:center;gap:17px;padding-left:5px}
  .pull{width:36px;height:7px;background:#c9c9c9;border-radius:0 0 5px 5px}
</style><div class="play">${btn('first', 'Go to start')}${btn('prev', 'Step back')}${btn('play', 'Play')}${btn('next', 'Step forward')}${btn('last', 'Go to end')}</div>
<div class="track"><div class="steps">${[...STEPS].map((s, i) => btn('t' + s, 'Feature ' + (i + 1))).join('')}${btn('marker', 'Timeline marker', 'mark')}</div><div class="rail"><i></i><i></i><b></b></div></div>
<div class="end"><div class="pull"></div>${btn('gear', 'Settings')}</div>`);

define('fusion-app', `<style>
  :host{display:flex;flex-direction:column;height:100vh}
  main{flex:1;min-height:0;display:grid;grid-template:minmax(0,1fr)/minmax(0,1fr)}
  model-view,browser-panel,nav-bar{grid-area:1/1}
  browser-panel{justify-self:start}
  nav-bar{place-self:end center;margin-bottom:5px}
</style>
<window-title>Autodesk Fusion 360 (Personal - Not for Commercial Use)</window-title>
<app-bar>LatteIntoshopen v14*</app-bar>
<tool-ribbon></tool-ribbon>
<main><model-view></model-view><browser-panel></browser-panel><nav-bar></nav-bar></main>
<time-line></time-line>`);
</script>
</body>
</html>
